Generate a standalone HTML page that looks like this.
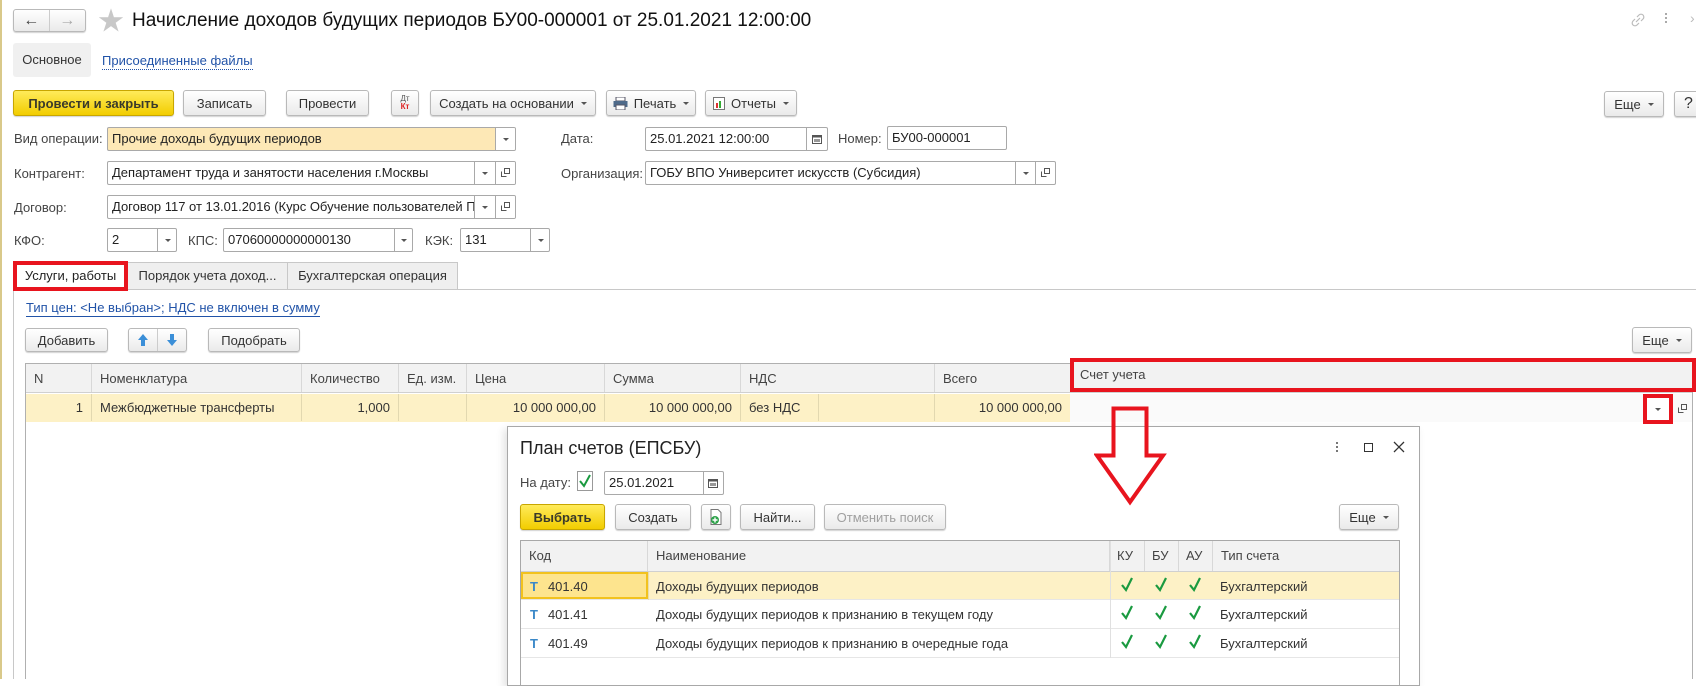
<!DOCTYPE html>
<html><head><meta charset="utf-8"><style>
*{box-sizing:border-box;margin:0;padding:0}
body{width:1696px;height:679px;overflow:hidden;background:#fff;font-family:"Liberation Sans","Noto Sans CJK SC",sans-serif;font-size:13px;color:#333;position:relative}
.a{position:absolute}
.btn{position:absolute;border:1px solid #b9b9b9;border-radius:3px;background:linear-gradient(#fff,#eaeaea);box-shadow:0 1px 1px rgba(0,0,0,.18);display:flex;align-items:center;justify-content:center;font-size:13px;color:#333;white-space:nowrap}
.yel{background:linear-gradient(#ffeb5a,#f2cd00);border-color:#c8a600;font-weight:bold;color:#3a3a2a}
.fld{position:absolute;border:1px solid #a9a9a9;border-radius:2px;background:#fff;font-size:13px;line-height:22px;padding-left:4px;white-space:nowrap;overflow:hidden;color:#222}
.sep{position:absolute;top:0;bottom:0;border-left:1px solid #a9a9a9}
.dd{position:absolute;width:0;height:0;border-left:3px solid transparent;border-right:3px solid transparent;border-top:3px solid #555}
.lbl{position:absolute;font-size:13px;color:#444;white-space:nowrap}
.caret{display:inline-block;width:0;height:0;border-left:3px solid transparent;border-right:3px solid transparent;border-top:3px solid #555;margin-left:7px;vertical-align:middle}
.th{position:absolute;top:0;height:100%;border-right:1px solid #d8d8d8;padding-left:8px;line-height:30px;color:#444;white-space:nowrap}
.td{position:absolute;top:0;height:100%;border-right:1px solid #e2d8b0;line-height:28px;padding:0 8px;white-space:nowrap;color:#333}
.open{position:absolute;width:9px;height:9px}
</style></head><body>
<div class="a" style="left:0;top:0;width:2px;height:679px;background:#d9c98a"></div>

<div class="btn" style="left:13px;top:9px;width:73px;height:23px;padding:0"><div style="width:36px;text-align:center;border-right:1px solid #ccc;font-size:16px;color:#444;line-height:21px">&#8592;</div><div style="width:36px;text-align:center;font-size:16px;color:#aaa;line-height:21px">&#8594;</div></div>
<div class="a" style="left:98px;top:6px;font-size:26px;color:#c8c8c8;line-height:30px">&#9733;</div>
<div class="a" style="left:132px;top:9px;font-size:19px;color:#111;white-space:nowrap;line-height:24px">Начисление доходов будущих периодов БУ00-000001 от 25.01.2021 12:00:00</div>
<svg class="a" style="left:1630px;top:12px" width="16" height="16" viewBox="0 0 16 16"><path d="M6 10 L10 6 M7 5 l2-2 a2.5 2.5 0 0 1 4 4 l-2 2 M9 11 l-2 2 a2.5 2.5 0 0 1 -4 -4 l2-2" fill="none" stroke="#bbb" stroke-width="1.2"/></svg>
<div class="a" style="left:1665px;top:13px;width:2px;height:2px;background:#aaa;box-shadow:0 4px #aaa,0 8px #aaa"></div>
<div class="a" style="left:1690px;top:10px;color:#bbb;font-size:14px">&#8250;</div>

<div class="a" style="left:13px;top:43px;width:78px;height:34px;background:#f0f0f0;border-radius:3px;line-height:34px;text-align:center;color:#333">Основное</div>
<div class="a" style="left:102px;top:52px;color:#2153a8;border-bottom:1px dotted #2153a8;line-height:17px">Присоединенные файлы</div>

<div class="btn yel" style="left:13px;top:90px;width:161px;height:26px">Провести и закрыть</div>
<div class="btn" style="left:183px;top:90px;width:83px;height:26px">Записать</div>
<div class="btn" style="left:286px;top:90px;width:83px;height:26px">Провести</div>
<div class="btn" style="left:391px;top:90px;width:28px;height:26px;flex-direction:column;line-height:8px"><span style="font-size:8px;color:#555">Дт</span><span style="font-size:8px;color:#d22;font-weight:bold">Кт</span></div>
<div class="btn" style="left:430px;top:90px;width:166px;height:26px">Создать на основании<span class="caret"></span></div>
<div class="btn" style="left:606px;top:90px;width:90px;height:26px"><svg width="15" height="13" style="margin-right:6px"><rect x="3" y="0" width="9" height="4" fill="#fff" stroke="#556"/><rect x="0.5" y="4" width="14" height="6" fill="#4e6a8a"/><rect x="3" y="8" width="9" height="5" fill="#fff" stroke="#556"/></svg>Печать<span class="caret"></span></div>
<div class="btn" style="left:705px;top:90px;width:92px;height:26px"><svg width="12" height="13" style="margin-right:6px"><rect x="0.5" y="0.5" width="11" height="12" fill="#fff" stroke="#777"/><rect x="3" y="6" width="2" height="5" fill="#d33"/><rect x="6" y="4" width="2" height="7" fill="#3a3"/></svg>Отчеты<span class="caret"></span></div>
<div class="btn" style="left:1604px;top:91px;width:60px;height:26px">Еще<span class="caret"></span></div>
<div class="btn" style="left:1674px;top:91px;width:30px;height:26px;font-size:16px;justify-content:flex-start;padding-left:9px">?</div>

<div class="lbl" style="left:14px;top:131px">Вид операции:</div>
<div class="fld" style="left:107px;top:127px;width:409px;height:24px;background:#fde8b6">Прочие доходы будущих периодов<div class="sep" style="left:387px"></div><div style="position:absolute;left:388px;top:0;width:21px;height:22px;background:#fff"></div><div class="dd" style="left:395px;top:10px"></div></div>
<div class="lbl" style="left:561px;top:131px">Дата:</div>
<div class="fld" style="left:645px;top:127px;width:183px;height:24px">25.01.2021 12:00:00<div class="sep" style="left:160px"></div><svg class="a" style="left:166px;top:6px" width="10" height="10"><rect x="0.5" y="1.5" width="9" height="8" fill="none" stroke="#555"/><rect x="0.5" y="1.5" width="9" height="2" fill="#555"/><rect x="2" y="5" width="6" height="3" fill="#999"/></svg></div>
<div class="lbl" style="left:838px;top:131px">Номер:</div>
<div class="fld" style="left:887px;top:126px;width:120px;height:24px">БУ00-000001</div>

<div class="lbl" style="left:14px;top:166px">Контрагент:</div>
<div class="fld" style="left:107px;top:161px;width:409px;height:24px">Департамент труда и занятости населения г.Москвы<div class="sep" style="left:366px"></div><div style="position:absolute;left:367px;top:0;width:42px;height:22px;background:#fff"></div><div class="dd" style="left:374px;top:10px"></div><div class="sep" style="left:387px"></div><svg class="open" style="left:393px;top:6px" viewBox="0 0 9 9"><path d="M3.5 .5h5v5h-5z M.5 3.5v5h5" fill="none" stroke="#555"/></svg></div>
<div class="lbl" style="left:561px;top:166px">Организация:</div>
<div class="fld" style="left:645px;top:161px;width:411px;height:24px">ГОБУ ВПО Университет искусств (Субсидия)<div class="sep" style="left:369px"></div><div class="dd" style="left:377px;top:10px"></div><div class="sep" style="left:389px"></div><svg class="open" style="left:395px;top:6px" viewBox="0 0 9 9"><path d="M3.5 .5h5v5h-5z M.5 3.5v5h5" fill="none" stroke="#555"/></svg></div>

<div class="lbl" style="left:14px;top:200px">Договор:</div>
<div class="fld" style="left:107px;top:195px;width:409px;height:24px">Договор 117 от 13.01.2016 (Курс Обучение пользователей П<div style="position:absolute;left:367px;top:0;width:42px;height:22px;background:#fff"></div><div class="sep" style="left:366px"></div><div class="dd" style="left:374px;top:10px"></div><div class="sep" style="left:387px"></div><svg class="open" style="left:393px;top:6px" viewBox="0 0 9 9"><path d="M3.5 .5h5v5h-5z M.5 3.5v5h5" fill="none" stroke="#555"/></svg></div>

<div class="lbl" style="left:14px;top:233px">КФО:</div>
<div class="fld" style="left:107px;top:228px;width:70px;height:24px">2<div class="sep" style="left:49px"></div><div class="dd" style="left:57px;top:10px"></div></div>
<div class="lbl" style="left:188px;top:233px">КПС:</div>
<div class="fld" style="left:223px;top:228px;width:190px;height:24px">07060000000000130<div class="sep" style="left:170px"></div><div class="dd" style="left:177px;top:10px"></div></div>
<div class="lbl" style="left:425px;top:233px">КЭК:</div>
<div class="fld" style="left:460px;top:228px;width:90px;height:24px">131<div class="sep" style="left:69px"></div><div class="dd" style="left:77px;top:10px"></div></div>

<div class="a" style="left:13px;top:289px;width:1683px;border-top:1px solid #c8c8c8"></div>
<div class="a" style="left:13px;top:289px;height:390px;border-left:1px solid #c8c8c8"></div>
<div class="a" style="left:127px;top:262px;width:161px;height:28px;background:#efefef;border:1px solid #c8c8c8;line-height:26px;text-align:center">Порядок учета доход...</div>
<div class="a" style="left:288px;top:262px;width:170px;height:28px;background:#efefef;border:1px solid #c8c8c8;border-left:none;line-height:26px;text-align:center">Бухгалтерская операция</div>
<div class="a" style="left:13px;top:261px;width:115px;height:30px;background:#fff;border:4px solid #e8141e;line-height:22px;text-align:center;color:#222">Услуги, работы</div>

<div class="a" style="left:26px;top:300px;color:#2153a8;border-bottom:1px solid #2153a8;line-height:16px">Тип цен: &lt;Не выбран&gt;; НДС не включен в сумму</div>

<div class="btn" style="left:25px;top:328px;width:83px;height:24px">Добавить</div>
<div class="btn" style="left:128px;top:328px;width:59px;height:24px;padding:0"><div style="width:29px;height:22px;border-right:1px solid #ccc;display:flex;align-items:center;justify-content:center"><svg width="10" height="12"><path d="M5 0 L10 6 H7 V12 H3 V6 H0 Z" fill="#3b8fd8"/></svg></div><div style="width:29px;display:flex;align-items:center;justify-content:center"><svg width="10" height="12"><path d="M5 12 L10 6 H7 V0 H3 V6 H0 Z" fill="#3b8fd8"/></svg></div></div>
<div class="btn" style="left:208px;top:328px;width:92px;height:24px">Подобрать</div>
<div class="btn" style="left:1632px;top:327px;width:60px;height:26px">Еще<span class="caret"></span></div>

<div class="a" style="left:25px;top:363px;width:1668px;height:316px;border:1px solid #b0b0b0;border-bottom:none"></div>
<div class="a" style="left:26px;top:364px;width:1666px;height:29px;background:#f2f2f2;border-bottom:1px solid #d0d0d0">
 <div class="th" style="left:0;width:66px">N</div>
 <div class="th" style="left:66px;width:210px">Номенклатура</div>
 <div class="th" style="left:276px;width:97px">Количество</div>
 <div class="th" style="left:373px;width:68px">Ед. изм.</div>
 <div class="th" style="left:441px;width:138px">Цена</div>
 <div class="th" style="left:579px;width:136px">Сумма</div>
 <div class="th" style="left:715px;width:194px">НДС</div>
 <div class="th" style="left:909px;width:136px;border-right:none">Всего</div>
</div>
<div class="a" style="left:1070px;top:358px;width:626px;height:34px;border:4px solid #e8141e;background:#f2f2f2;line-height:26px;padding-left:6px;color:#444">Счет учета</div>
<div class="a" style="left:26px;top:394px;width:1666px;height:28px;border-bottom:1px solid #e0e0e0">
 <div style="position:absolute;left:0;top:0;width:1044px;height:28px;background:#fdf1c6"></div>
 <div class="td" style="left:0;width:66px;text-align:right">1</div>
 <div class="td" style="left:66px;width:210px">Межбюджетные трансферты</div>
 <div class="td" style="left:276px;width:97px;text-align:right">1,000</div>
 <div class="td" style="left:373px;width:68px"></div>
 <div class="td" style="left:441px;width:138px;text-align:right">10 000 000,00</div>
 <div class="td" style="left:579px;width:136px;text-align:right">10 000 000,00</div>
 <div class="td" style="left:715px;width:78px">без НДС</div>
 <div class="td" style="left:793px;width:116px"></div>
 <div class="td" style="left:909px;width:135px;text-align:right;border-right:none">10 000 000,00</div>
 <div style="position:absolute;left:1044px;top:0;width:622px;height:28px;background:#fafafa"></div>
</div>
<div class="a" style="left:1643px;top:394px;width:30px;height:30px;border:4px solid #e8141e;background:#fff"><div class="dd" style="left:8px;top:10px"></div></div>
<svg class="open a" style="left:1678px;top:404px" viewBox="0 0 9 9"><path d="M3.5 .5h5v5h-5z M.5 3.5v5h5" fill="none" stroke="#555"/></svg>

<div class="a" style="left:507px;top:426px;width:913px;height:260px;background:#fff;border:1px solid #a8a8a8;box-shadow:-3px 3px 8px rgba(0,0,0,.12)"></div>
<div class="a" style="left:520px;top:436px;font-size:18px;color:#222;line-height:24px">План счетов (ЕПСБУ)</div>
<div class="a" style="left:1336px;top:442px;width:2px;height:2px;background:#777;box-shadow:0 4px #777,0 8px #777"></div>
<div class="a" style="left:1364px;top:443px;width:9px;height:9px;border:1.5px solid #333"></div>
<svg class="a" style="left:1393px;top:441px" width="12" height="12"><path d="M1 1 L11 11 M11 1 L1 11" stroke="#333" stroke-width="1.3"/></svg>

<div class="lbl" style="left:520px;top:475px">На дату:</div>
<div class="a" style="left:577px;top:471px;width:16px;height:20px;border:1px solid #999;background:#fff"><svg width="14" height="18"><path d="M2 9 L6 14 L12 3" fill="none" stroke="#1a9a40" stroke-width="2"/></svg></div>
<div class="fld" style="left:604px;top:471px;width:120px;height:24px">25.01.2021<div class="sep" style="left:98px"></div><svg class="a" style="left:103px;top:6px" width="10" height="10"><rect x="0.5" y="1.5" width="9" height="8" fill="none" stroke="#555"/><rect x="0.5" y="1.5" width="9" height="2" fill="#555"/><rect x="2" y="5" width="6" height="3" fill="#999"/></svg></div>

<div class="btn yel" style="left:520px;top:504px;width:85px;height:26px">Выбрать</div>
<div class="btn" style="left:615px;top:504px;width:76px;height:26px">Создать</div>
<div class="btn" style="left:701px;top:504px;width:30px;height:26px"><svg width="14" height="16"><path d="M2 .5h7l3 3v12h-10z" fill="#fff" stroke="#777"/><circle cx="6" cy="11" r="4" fill="#2ea34a"/><path d="M6 8.5v5M3.5 11h5" stroke="#fff" stroke-width="1.4"/></svg></div>
<div class="btn" style="left:740px;top:504px;width:75px;height:26px">Найти...</div>
<div class="btn" style="left:824px;top:504px;width:122px;height:26px;color:#a0a0a0">Отменить поиск</div>
<div class="btn" style="left:1339px;top:504px;width:60px;height:26px">Еще<span class="caret"></span></div>

<div class="a" style="left:520px;top:540px;width:880px;height:146px;border:1px solid #a8a8a8;border-bottom:none"></div>
<div class="a" style="left:521px;top:541px;width:878px;height:31px;background:#f2f2f2;border-bottom:1px solid #d0d0d0">
 <div class="th" style="left:0;width:127px">Код</div>
 <div class="th" style="left:127px;width:462px">Наименование</div>
 <div class="th" style="left:589px;width:35px;padding-left:7px">КУ</div>
 <div class="th" style="left:624px;width:34px;padding-left:7px">БУ</div>
 <div class="th" style="left:658px;width:34px;padding-left:7px">АУ</div>
 <div class="th" style="left:692px;width:186px;border-right:none">Тип счета</div>
</div>
<div class="a" style="left:521px;top:572px;width:878px;height:28px;background:#fdf1c6;border-bottom:1px solid #e6e6e6"></div>
<div class="a" style="left:521px;top:572px;width:127px;height:27px;background:#fde48e;border:2px solid #f2c21e"></div>
<div class="a" style="left:521px;top:600px;width:878px;height:29px;border-bottom:1px solid #e6e6e6"></div>
<div class="a" style="left:521px;top:629px;width:878px;height:29px;border-bottom:1px solid #e6e6e6"></div>
<div class="a" style="left:1110px;top:541px;height:117px;border-left:1px solid #e0e0e0"></div>
<div class="a" style="left:648px;top:572px;height:28px;border-left:1px solid #e8dcb0"></div>

<div class="a" style="left:530px;top:577px;line-height:20px;color:#333;white-space:nowrap"><span style="color:#3a88c8;font-weight:bold;margin-right:10px">T</span>401.40</div>
<div class="a" style="left:530px;top:605px;line-height:20px;color:#333;white-space:nowrap"><span style="color:#3a88c8;font-weight:bold;margin-right:10px">T</span>401.41</div>
<div class="a" style="left:530px;top:634px;line-height:20px;color:#333;white-space:nowrap"><span style="color:#3a88c8;font-weight:bold;margin-right:10px">T</span>401.49</div>
<div class="a" style="left:656px;top:577px;line-height:20px;white-space:nowrap">Доходы будущих периодов</div>
<div class="a" style="left:656px;top:605px;line-height:20px;white-space:nowrap">Доходы будущих периодов к признанию в текущем году</div>
<div class="a" style="left:656px;top:634px;line-height:20px;white-space:nowrap">Доходы будущих периодов к признанию в очередные года</div>
<div class="a" style="left:1220px;top:577px;line-height:20px">Бухгалтерский</div>
<div class="a" style="left:1220px;top:605px;line-height:20px">Бухгалтерский</div>
<div class="a" style="left:1220px;top:634px;line-height:20px">Бухгалтерский</div>
<svg class="a" style="left:1120px;top:575px" width="95" height="90">
 <g fill="none" stroke="#1a9a40" stroke-width="2.2">
  <path d="M2 10 L6 15 L12 3"/><path d="M36 10 L40 15 L46 3"/><path d="M70 10 L74 15 L80 3"/>
  <path d="M2 38 L6 43 L12 31"/><path d="M36 38 L40 43 L46 31"/><path d="M70 38 L74 43 L80 31"/>
  <path d="M2 67 L6 72 L12 60"/><path d="M36 67 L40 72 L46 60"/><path d="M70 67 L74 72 L80 60"/>
 </g>
</svg>

<svg class="a" style="left:1094px;top:405px" width="74" height="102">
 <path d="M19.5 3.5 H52.5 V50.5 H69 L36 97 L3 50.5 H19.5 Z" fill="none" stroke="#e8141e" stroke-width="4" stroke-linejoin="miter"/>
</svg>
</body></html>
